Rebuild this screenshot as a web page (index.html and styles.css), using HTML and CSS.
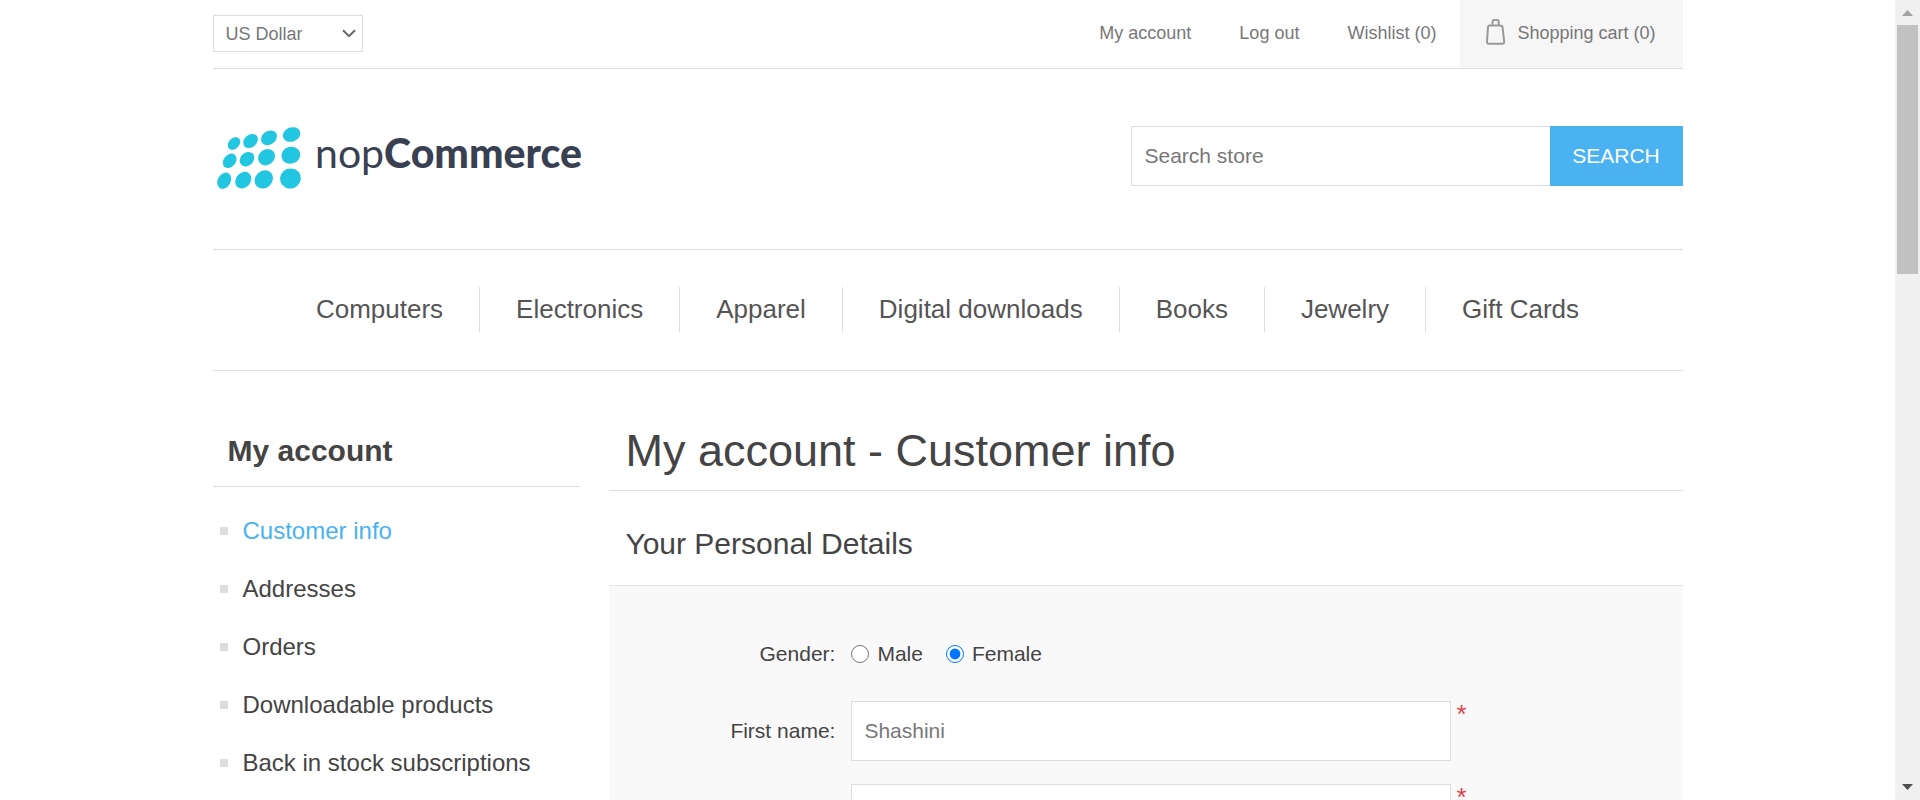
FILE: index.html
```html
<!DOCTYPE html>
<html lang="en">
<head>
<meta charset="utf-8">
<meta name="viewport" content="width=device-width, initial-scale=1">
<title>nopCommerce demo store. Account</title>
<link rel="stylesheet" href="styles.css">
</head>
<body>
<div class="page">
  <div class="wrapper">
    <header class="topbar">
      <div class="currency">
        <select aria-label="Currency">
          <option>US Dollar</option>
          <option>Euro</option>
        </select>
        <svg class="chevron" viewBox="0 0 14 9" aria-hidden="true"><path d="M1 1.200l6 6 6-6"/></svg>
      </div>
      <nav class="links" aria-label="Account links">
        <a href="#">My account</a>
        <a href="#">Log out</a>
        <a href="#">Wishlist (0)</a>
        <a class="cart" href="#">
          <svg class="bag" viewBox="0 0 20 26" aria-hidden="true">
            <path d="M3.500 6.500h10q2.800 0 3 1.500l1.700 14.500q0 2.200-1.800 2.200H2.600Q.8 24.700 1 22.500L2 8q.1-1.500 1.500-1.500z"/>
            <path d="M6.500 6.500V3q0-2 2-2h2.200q2 0 2 2v3.500"/>
          </svg>
          <span>Shopping cart (0)</span>
        </a>
      </nav>
    </header>

    <div class="brand">
      <a class="logo" href="#" aria-label="nopCommerce">
        <svg viewBox="0 0 375 72" role="img" aria-label="nopCommerce">
          <g fill="#23c6e0">
            <ellipse cx="21" cy="21.500" rx="7.200" ry="5.200" transform="rotate(-45 21 21.500)"/>
            <ellipse cx="37.600" cy="19" rx="8" ry="6.200" transform="rotate(-40 37.600 19)"/>
            <ellipse cx="56" cy="15.800" rx="8.600" ry="6.700" transform="rotate(-35 56 15.800)"/>
            <ellipse cx="78.600" cy="12.500" rx="9" ry="7.100" transform="rotate(-20 78.600 12.500)"/>
            <ellipse cx="16.700" cy="38.800" rx="8" ry="6" transform="rotate(-50 16.700 38.800)"/>
            <ellipse cx="34" cy="37.200" rx="8" ry="6.500" transform="rotate(-45 34 37.200)"/>
            <ellipse cx="53.600" cy="35.200" rx="9" ry="7.700" transform="rotate(-40 53.600 35.200)"/>
            <ellipse cx="77.800" cy="33.200" rx="9.500" ry="8.400" transform="rotate(-15 77.800 33.200)"/>
            <ellipse cx="11.200" cy="58.700" rx="8.600" ry="6.400" transform="rotate(-60 11.200 58.700)"/>
            <ellipse cx="30.200" cy="58.200" rx="9" ry="7.300" transform="rotate(-50 30.200 58.200)"/>
            <ellipse cx="50.800" cy="57.400" rx="9.800" ry="8.500" transform="rotate(-45 50.800 57.400)"/>
            <ellipse cx="77.400" cy="56.500" rx="10.500" ry="10" transform="rotate(-20 77.400 56.500)"/>
          </g>
          <text class="wordmark" x="102" y="46">nop<tspan class="wordmark-bold">Commerce</tspan></text>
        </svg>
      </a>
      <form class="search">
        <input type="text" placeholder="Search store" aria-label="Search store">
        <button type="button">SEARCH</button>
      </form>
    </div>

    <nav class="menu" aria-label="Categories">
      <a href="#">Computers</a>
      <a href="#">Electronics</a>
      <a href="#">Apparel</a>
      <a href="#">Digital downloads</a>
      <a href="#">Books</a>
      <a href="#">Jewelry</a>
      <a href="#">Gift Cards</a>
    </nav>

    <div class="columns">
      <aside class="side">
        <h2>My account</h2>
        <ul>
          <li><a class="active" href="#">Customer info</a></li>
          <li><a href="#">Addresses</a></li>
          <li><a href="#">Orders</a></li>
          <li><a href="#">Downloadable products</a></li>
          <li><a href="#">Back in stock subscriptions</a></li>
        </ul>
      </aside>
      <main class="content">
        <h1>My account - Customer info</h1>
        <h2>Your Personal Details</h2>
        <form class="panel">
          <div class="row gender" role="radiogroup" aria-labelledby="gender-label">
            <span class="label" id="gender-label">Gender:</span>
            <div class="options">
              <label><input type="radio" name="gender">Male</label>
              <label><input type="radio" name="gender" checked>Female</label>
            </div>
          </div>
          <div class="row">
            <label class="label" for="first-name">First name:</label>
            <input class="field" id="first-name" type="text" value="Shashini">
            <span class="required">*</span>
          </div>
          <div class="row">
            <label class="label" for="last-name">Last name:</label>
            <input class="field" id="last-name" type="text">
            <span class="required">*</span>
          </div>
        </form>
      </main>
    </div>
  </div>
</div>
<div class="scrollbar" aria-hidden="true">
  <svg class="arrow-up" viewBox="0 0 11 6"><path d="M5.500 0L11 6H0z"/></svg>
  <div class="thumb"></div>
  <svg class="arrow-down" viewBox="0 0 11 6"><path d="M0 0h11L5.500 6z"/></svg>
</div>
</body>
</html>
```
FILE: styles.css
```css
* {
  box-sizing: border-box;
}

body {
  display: flex;
  height: 100vh;
  margin: 0;
  overflow: hidden;
  background: #fff;
  color: #444;
  font-family: "Liberation Sans", Arial, sans-serif;
  font-size: 21px;
}

a {
  color: inherit;
  text-decoration: none;
}

input,
button,
select {
  margin: 0;
  border-radius: 0;
  font: inherit;
}

h1,
h2,
ul {
  margin: 0;
  padding: 0;
  font-weight: normal;
}

.page {
  flex: 1;
  min-width: 0;
  overflow-y: auto;
  scrollbar-width: none;
}

.wrapper {
  max-width: 1470px;
  margin: 0 auto;
}

/* Top bar */
.topbar {
  display: flex;
  justify-content: space-between;
  border-bottom: 1px solid #ddd;
  color: #777;
  font-size: 18px;
}

.currency {
  position: relative;
  width: 150px;
  height: 37px;
  margin-top: 15px;
}

.currency select {
  width: 100%;
  height: 100%;
  padding: 0 12px;
  border: 1px solid #ddd;
  appearance: none;
  background: #fff;
  color: #777;
}

.chevron {
  position: absolute;
  top: 14px;
  right: 7px;
  width: 14px;
  height: 9px;
  fill: none;
  stroke: #666;
  stroke-width: 2;
  pointer-events: none;
}

.links {
  display: flex;
  gap: 48px;
  line-height: 66px;
}

.cart {
  display: flex;
  gap: 11px;
  height: 68px;
  margin-left: -24px;
  padding: 0 27px 0 26px;
  background: #f6f6f6;
}

.bag {
  width: 20px;
  height: 26px;
  margin-top: 19px;
  fill: none;
  stroke: #999;
  stroke-width: 2;
}

/* Logo and search */
.brand {
  display: flex;
  align-items: center;
  justify-content: space-between;
  height: 180px;
  padding-bottom: 6px;
}

.logo svg {
  display: block;
  width: 375px;
  height: 72px;
  margin-top: 4px;
}

.wordmark {
  fill: #384052;
  font-family: Lato, sans-serif;
  font-size: 41px;
}

.wordmark-bold {
  font-weight: 900;
}

.search {
  display: flex;
  height: 60px;
}

.search input {
  width: 419px;
  padding: 0 13px;
  border: 1px solid #ddd;
  border-right: 0;
}

.search input::placeholder {
  color: #777;
}

.search button {
  width: 133px;
  padding: 0;
  border: 0;
  background: #4ab2f1;
  color: #fff;
}

/* Category menu */
.menu {
  display: flex;
  justify-content: center;
  padding: 37px 0 38px;
  border-top: 1px solid #ddd;
  border-bottom: 1px solid #ddd;
  color: #555;
  font-size: 26px;
  line-height: 45px;
}

.menu a {
  padding: 0 36px;
}

.menu a + a {
  border-left: 1px solid #ddd;
}

/* Columns */
.columns {
  display: grid;
  grid-template-columns: 25% 73%;
  justify-content: space-between;
  align-items: start;
  padding-top: 50px;
}

.side h2 {
  padding: 0 15px 5px;
  border-bottom: 1px solid #ddd;
  font-size: 30px;
  font-weight: bold;
  line-height: 60px;
}

.side ul {
  padding: 15px 7px;
  font-size: 24px;
  line-height: 58px;
  list-style: none;
}

.side li {
  display: flex;
  align-items: center;
  gap: 15px;
}

.side li::before {
  width: 8px;
  height: 8px;
  background: #ddd;
  content: "";
}

.active {
  color: #4ab2f1;
}

.content h1 {
  padding: 0 16px 9px;
  border-bottom: 1px solid #ddd;
  font-size: 45px;
  line-height: 60px;
}

.content h2 {
  padding: 28px 16px 16px;
  font-size: 30px;
  line-height: 50px;
}

/* Form */
.panel {
  padding: 44px 0;
  border-top: 1px solid #e5e5e5;
  background: #f9f9f9;
}

.row {
  display: grid;
  grid-template-columns: 226px minmax(0, 616px) auto;
  justify-content: start;
  align-items: center;
  margin-bottom: 23px;
}

.gender {
  height: 48px;
}

.label {
  text-align: right;
}

.options,
.field {
  margin-left: 16px;
}

.options {
  display: flex;
  gap: 23px;
}

.options label {
  display: flex;
  align-items: center;
  gap: 8px;
}

.options input {
  width: 18px;
  height: 18px;
  accent-color: #0075ff;
}

.field {
  height: 60px;
  padding: 0 12px;
  border: 1px solid #ddd;
  background: #fff;
  color: #777;
}

.required {
  align-self: start;
  padding-left: 5px;
  color: #e4434b;
  font-size: 26px;
  line-height: 26px;
}

/* Scrollbar */
.scrollbar {
  display: flex;
  flex-direction: column;
  align-items: center;
  width: 25px;
  padding: 10px 0;
  background: #f0f0f0;
}

.scrollbar svg {
  width: 11px;
  height: 6px;
}

.arrow-up {
  fill: #a3a3a3;
}

.arrow-down {
  margin-top: auto;
  fill: #505050;
}

.thumb {
  width: 21px;
  height: 249px;
  margin-top: 9px;
  background: #c1c1c1;
}
```
